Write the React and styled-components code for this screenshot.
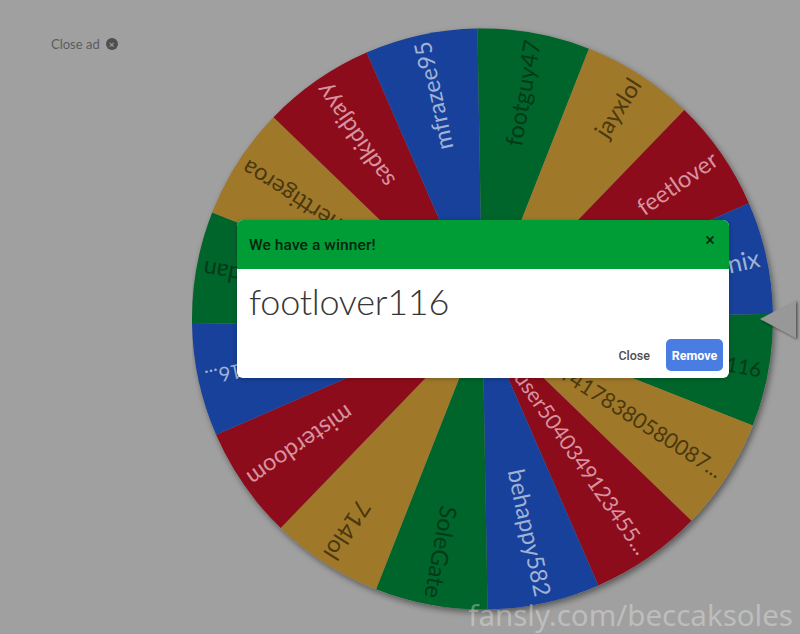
import React from 'react';
import styled, { createGlobalStyle } from 'styled-components';

const Global = createGlobalStyle`
  html, body { margin: 0; padding: 0; background: #a0a0a0; }
`

const Page = styled.div`
  position: relative;
  width: 800px;
  height: 634px;
  overflow: hidden;
  display: flex;
  background: #a0a0a0;
  font-family: Roboto, "Liberation Sans", sans-serif;
`
const AdColumn = styled.div`
  width: 192px;
  flex: none;
  box-sizing: border-box;
  padding: 36px 0 0 51px;
`
const CloseAd = styled.div`
  display: flex;
  align-items: center;
  gap: 6px;
  font-family: Lato, sans-serif;
  font-size: 13px;
  color: #5c5c5c;
`
const CloseDot = styled.span`
  width: 12px;
  height: 12px;
  border-radius: 50%;
  background: #4f4f4f;
  color: #a0a0a0;
  font-size: 10px;
  line-height: 12px;
  text-align: center;
  font-weight: 700;
`
const WheelSvg = styled.svg`
  width: 608px;
  height: 634px;
  flex: none;
  display: block;
`
const SliceLabel = styled.text`
  font-family: Lato, sans-serif;
  font-size: ${(p) => p.$size}px;
  font-weight: 400;
`
const Modal = styled.div`
  position: absolute;
  left: 237px;
  top: 220px;
  width: 492px;
  height: 158px;
  border-radius: 6px;
  overflow: hidden;
  background: #fff;
  display: flex;
  flex-direction: column;
  box-shadow: 0 1px 4px rgba(0, 0, 0, 0.25);
`
const ModalHeader = styled.div`
  height: 49px;
  flex: none;
  box-sizing: border-box;
  background: #009c36;
  display: flex;
  justify-content: space-between;
  padding: 16px 14px 0 12px;
  color: #07240f;
  font-size: 15.5px;
  font-weight: 500;
  letter-spacing: 0.1px;
`
const Dismiss = styled.span`
  font-size: 18px;
  line-height: 14px;
  margin-top: -3px;
  font-weight: 400;
`
const Winner = styled.div`
  font-family: Lato, sans-serif;
  font-weight: 300;
  font-size: 36px;
  letter-spacing: -0.25px;
  line-height: 44px;
  color: #363636;
  padding: 10px 0 0 12px;
`
const Actions = styled.div`
  margin-top: auto;
  padding: 0 6px 7px 0;
  display: flex;
  justify-content: flex-end;
  align-items: center;
  gap: 16px;
`
const CloseButton = styled.button`
  border: 0;
  padding: 0;
  background: none;
  font: 500 12.5px Roboto, sans-serif;
  color: #4d4d4d;
`
const RemoveButton = styled.button`
  border: 0;
  width: 57px;
  height: 32px;
  padding: 0;
  border-radius: 5px;
  background: #4a7de2;
  font: 700 12.5px Roboto, sans-serif;
  color: #fff;
`
const Watermark = styled.div`
  position: absolute;
  right: 7px;
  bottom: 1px;
  font-family: "Noto Sans", sans-serif;
  font-size: 29.5px;
  line-height: 36px;
  color: rgba(255, 255, 255, 0.32);
`

const COLORS = {
  green: '#00652b',
  gold: '#a0782a',
  red: '#8d0c1c',
  blue: '#17419a',
}
const INK = {
  green: '#033a18',
  gold: '#4a380e',
  red: '#d7939f',
  blue: '#9fb2d6',
}

// name, colour, font size
const slices = [
  ['footlover116', 'green', 20.5],
  ['user4178380580087...', 'gold', 21.5],
  ['user5040349123455...', 'red', 21.5],
  ['behappy582', 'blue', 23.5],
  ['SoleGate', 'green', 23.5],
  ['714lol', 'gold', 23.5],
  ['misterdoom', 'red', 23.5],
  ['user2316...', 'blue', 20],
  ['jordan', 'green', 23.5],
  ['herttigeroa', 'gold', 23.5],
  ['sadkiddjayy', 'red', 23.5],
  ['mfrazee95', 'blue', 23.5],
  ['footguy47', 'green', 23.5],
  ['jayxlol', 'gold', 23.5],
  ['feetlover', 'red', 23.5],
  ['phoenix', 'blue', 25],
]

const CX = 290.5
const CY = 319
const R = 290.5
const STEP = 22.5
const START = -1

function point(deg) {
  const a = (deg * Math.PI) / 180
  return `${CX + R * Math.cos(a)} ${CY + R * Math.sin(a)}`
}

function Wheel() {
  return (
    <WheelSvg viewBox="0 0 608 634">
      <defs>
        <filter id="rim" x="-5%" y="-5%" width="110%" height="110%">
          <feDropShadow dx="2" dy="3" stdDeviation="3" floodColor="#000" floodOpacity="0.45" />
        </filter>
        <filter id="tip" x="-20%" y="-20%" width="140%" height="140%">
          <feDropShadow dx="1.5" dy="1.5" stdDeviation="1.2" floodColor="#000" floodOpacity="0.5" />
        </filter>
      </defs>
      <circle cx={CX} cy={CY} r={R} fill="#888" filter="url(#rim)" />
      {slices.map(([name, color, size], i) => {
        const from = START + i * STEP
        const mid = from + STEP / 2
        return (
          <g key={name}>
            <path
              d={`M${CX} ${CY} L${point(from)} A${R} ${R} 0 0 1 ${point(from + STEP)} Z`}
              fill={COLORS[color]}
            />
            <SliceLabel
              $size={size}
              transform={`translate(${CX} ${CY}) rotate(${mid})`}
              x={R - 7}
              y={8}
              textAnchor="end"
              fill={INK[color]}
            >
              {name}
            </SliceLabel>
          </g>
        )
      })}
      {/* pointer */}
      <path d="M568 319 L604 300 L604 338 Z" fill="#989898" filter="url(#tip)" />
    </WheelSvg>
  )
}

export default function App() {
  return (
    <Page>
      <Global />
      <AdColumn>
        <CloseAd>
          Close ad <CloseDot>×</CloseDot>
        </CloseAd>
      </AdColumn>
      <Wheel />
      <Modal>
        <ModalHeader>
          We have a winner!
          <Dismiss>×</Dismiss>
        </ModalHeader>
        <Winner>footlover116</Winner>
        <Actions>
          <CloseButton>Close</CloseButton>
          <RemoveButton>Remove</RemoveButton>
        </Actions>
      </Modal>
      <Watermark>fansly.com/beccaksoles</Watermark>
    </Page>
  )
}
